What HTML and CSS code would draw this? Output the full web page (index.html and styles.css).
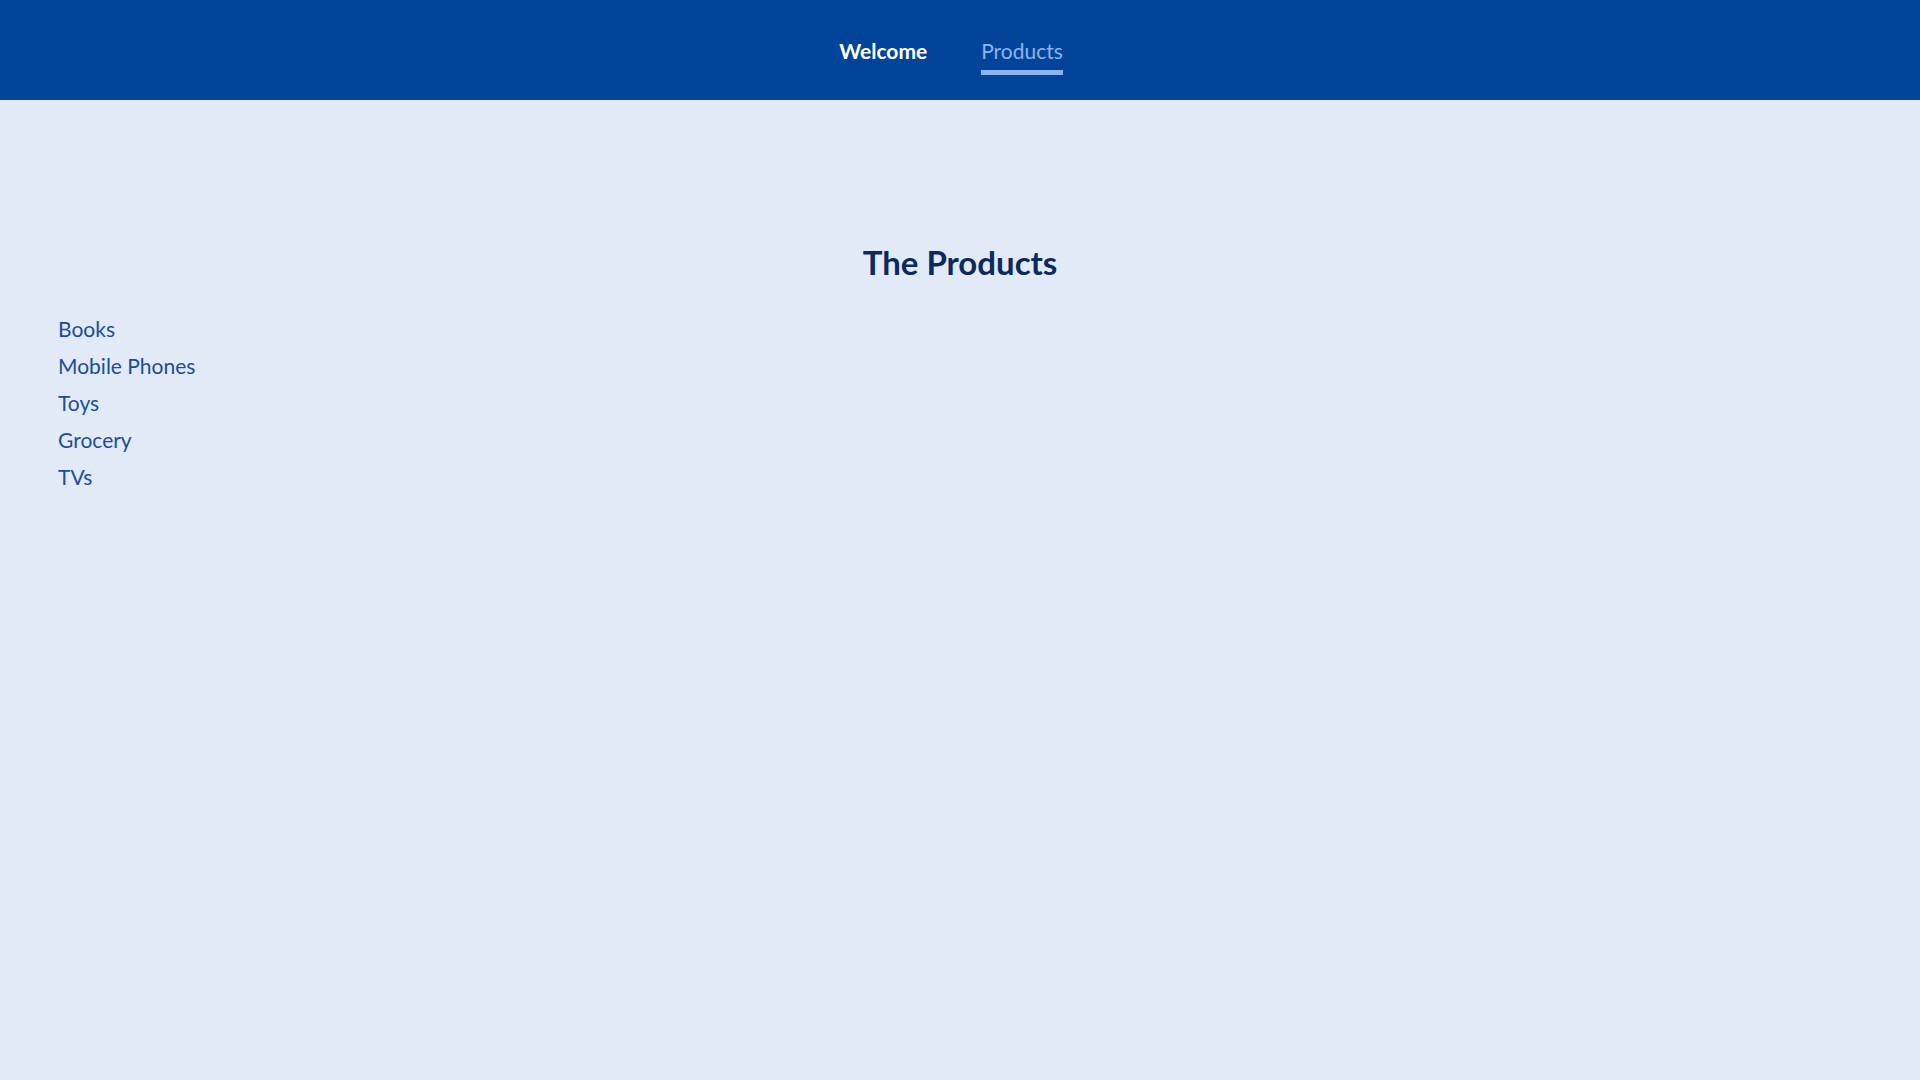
FILE: index.html
```html
<!DOCTYPE html>
<html lang="en">
<head>
<meta charset="utf-8">
<title>Products</title>
<link rel="stylesheet" href="styles.css">
</head>
<body>
<header class="topbar">
  <nav class="nav">
    <a class="nav-link" href="#">Welcome</a>
    <a class="nav-link active" href="#">Products</a>
  </nav>
</header>
<main class="content">
  <h1 class="title">The Products</h1>
  <ul class="product-list">
    <li><a href="#">Books</a></li>
    <li><a href="#">Mobile Phones</a></li>
    <li><a href="#">Toys</a></li>
    <li><a href="#">Grocery</a></li>
    <li><a href="#">TVs</a></li>
  </ul>
</main>
</body>
</html>
```
FILE: styles.css
```css
html, body {
  margin: 0;
  padding: 0;
  height: 100%;
}
body {
  background: #e2eaf7;
  font-family: Lato, "Noto Sans", sans-serif;
}
.topbar {
  background: #03449b;
  height: 100px;
  display: flex;
  justify-content: center;
}
.nav {
  display: flex;
  gap: 54px;
  padding-top: 38px;
  box-sizing: border-box;
  margin-right: 18px;
}
.nav-link {
  color: #ffffff;
  text-decoration: none;
  font-size: 21px;
  font-weight: 700;
  height: 37px;
  box-sizing: border-box;
  line-height: 25px;
}
.nav-link.active {
  color: #8ab4f0;
  font-weight: 400;
  border-bottom: 5px solid #8ab4f0;
}
.content {
  padding: 140px 58px 0;
}
.title {
  margin: 0;
  text-align: center;
  color: #0b2a5e;
  font-size: 33px;
  font-weight: 700;
  line-height: 44px;
}
.product-list {
  list-style: none;
  margin: 26px 0 0;
  padding: 0;
}
.product-list li {
  height: 37px;
  line-height: 37px;
}
.product-list a {
  color: #1a4d9e;
  text-decoration: none;
  font-size: 21px;
}
```
